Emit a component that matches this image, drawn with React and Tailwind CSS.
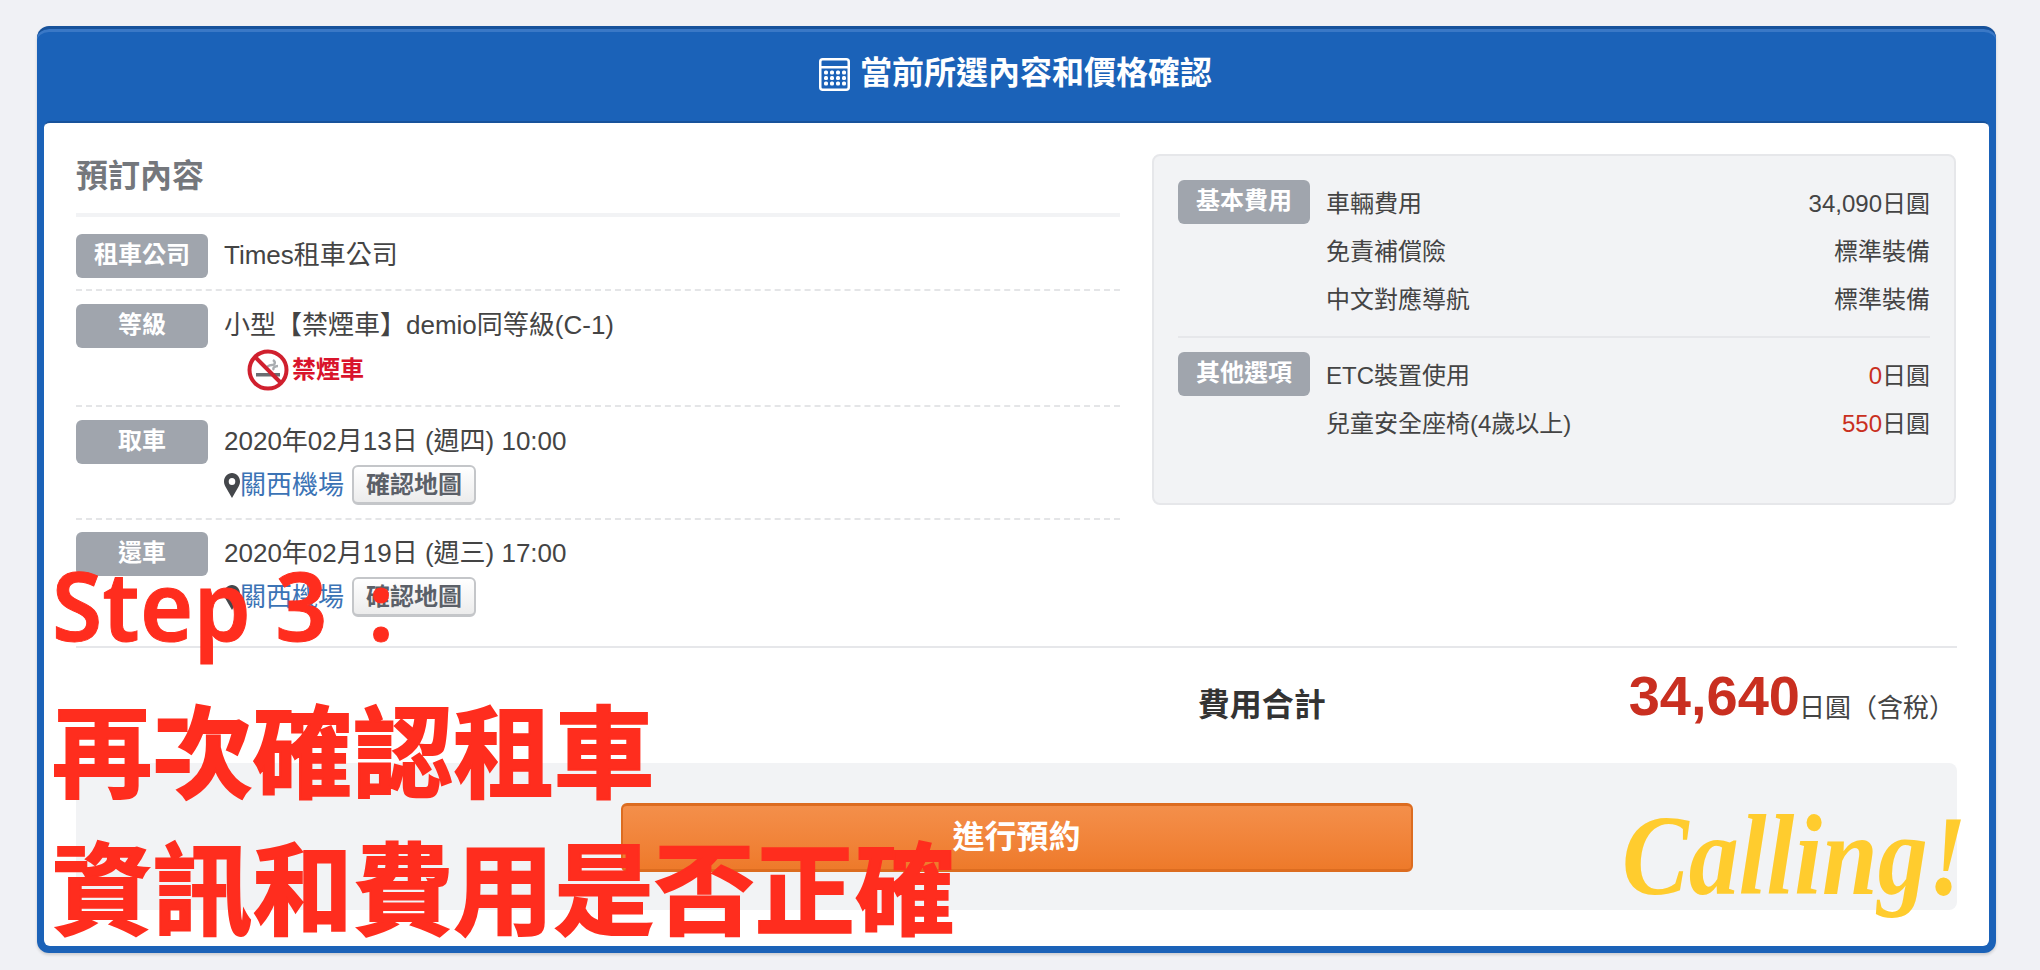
const cjk = "font-['Liberation_Sans','Noto_Sans_CJK_TC',sans-serif]";

function Label({ children }) {
  return (
    <div className="w-[132px] h-[44px] shrink-0 rounded-[6px] bg-[#a0a5ad] flex items-center justify-center text-white text-[24px] font-bold leading-none pb-[2px]">
      {children}
    </div>
  );
}

function CalcIcon() {
  return (
    <svg width="31" height="33" viewBox="0 0 31 33" className="mr-[10px] mt-[4px]">
      <rect x="1.250" y="1.250" width="28.500" height="30.500" rx="2.500" fill="none" stroke="#fff" strokeWidth="2.500" />
      <rect x="1" y="8" width="29" height="2.500" fill="#fff" />
      {[14.500, 20, 25.500].map((y) =>
        [7, 13, 19, 25].map((x) => <rect key={x + "-" + y} x={x - 2} y={y - 2} width="4" height="4" rx="1.500" fill="#fff" />)
      )}
    </svg>
  );
}

function NoSmoke() {
  return (
    <svg width="42" height="42" viewBox="0 0 42 42">
      <circle cx="21" cy="21" r="18.5" fill="#fff" stroke="#d0202e" strokeWidth="4" />
      <rect x="9" y="24" width="24" height="3.5" fill="#6b6e72" />
      <path d="M21 21c-3-3 1-5 4-5s4-3 1-5M27 21c-2-2 1-4 4-4" fill="none" stroke="#a9acb0" strokeWidth="2.4" />
      <path d="M8 8 L34 34" stroke="#d0202e" strokeWidth="4" />
    </svg>
  );
}

function Pin() {
  return (
    <svg width="16" height="25" viewBox="0 0 17 25" className="shrink-0" preserveAspectRatio="none">
      <path fillRule="evenodd" d="M8.5 0C3.8 0 0 3.8 0 8.5c0 2 .7 3.500 1.600 5.200L8.500 25l6.900-11.300c.9-1.700 1.600-3.200 1.600-5.200C17 3.800 13.200 0 8.500 0zm0 5a3.500 3.500 0 1 1 0 7 3.500 3.500 0 0 1 0-7z" fill="#44474b" />
    </svg>
  );
}

function MapLine() {
  return (
    <div className="flex items-center mt-[6px]">
      <Pin />
      <span className="text-[#3b73b5] text-[26px] leading-[36px] mr-[8px]">關西機場</span>
      <button className="w-[124px] h-[40px] rounded-[6px] border-2 border-[#c4c6c9] border-b-[3px] bg-gradient-to-b from-[#ffffff] to-[#ececec] text-[#5b6068] text-[24px] font-bold leading-none">
        確認地圖
      </button>
    </div>
  );
}

function Row({ label, children, last, className }) {
  return (
    <div className={"flex " + className + (last ? "" : " border-b-2 border-dashed border-[#e4e5e7]")}>
      <Label>{label}</Label>
      <div className="ml-[16px] pt-[3px] text-[#444] text-[26px] leading-[36px]">{children}</div>
    </div>
  );
}

function FeeRow({ name, children }) {
  return (
    <div className="h-[48px] flex items-center justify-between text-[#444] text-[24px] leading-none">
      <span>{name}</span>
      <span>{children}</span>
    </div>
  );
}

export default function App() {
  return (
    <div className={"relative h-[970px] overflow-hidden bg-[#f0f1f5] pt-[26px] pl-[37px] " + cjk}>
      <div className="w-[1959px] h-[927px] rounded-[12px] bg-[#1b62b8] border-t-[3px] border-t-[#17529b] shadow-[inset_0_3px_0_#3a78c6,0_2px_3px_rgba(0,0,0,0.15)] px-[7px] flex flex-col">
        <div className="h-[92px] shrink-0 flex items-center justify-center text-white text-[32px] font-bold pb-[5px] pr-[2px]">
          <CalcIcon />
          當前所選內容和價格確認
        </div>

        <div className="h-[825px] rounded-[6px] bg-white border-t-2 border-t-[#17529b] px-[32px] pt-[31px]">
          <div className="flex gap-[32px] h-[492px]">
            <div className="w-[1044px]">
              <h2 className="h-[59px] pt-[2px] text-[#74777c] text-[32px] font-bold leading-[40px]">預訂內容</h2>
              <div className="h-[4px] bg-[#f2f3f5]" />
              <Row label="租車公司" className="pt-[17px] h-[74px]">
                Times租車公司
              </Row>
              <Row label="等級" className="pt-[13px] h-[116px]">
                小型【禁煙車】demio同等級(C-1)
                <div className="flex items-center ml-[23px] mt-[6px]">
                  <NoSmoke />
                  <span className="text-[#d9142b] text-[24px] font-bold leading-none ml-[3px]">禁煙車</span>
                </div>
              </Row>
              <Row label="取車" className="pt-[13px] h-[113px]">
                2020年02月13日 (週四) 10:00
                <MapLine />
              </Row>
              <Row label="還車" className="pt-[12px]" last>
                2020年02月19日 (週三) 17:00
                <MapLine />
              </Row>
            </div>

            <div className="w-[804px] h-[351px] rounded-[8px] bg-[#f2f3f5] border-2 border-[#e6e7ea] px-[24px] pt-[24px]">
              <div className="flex gap-[16px] pb-[14px] border-b-2 border-[#e6e7ea]">
                <Label>基本費用</Label>
                <div className="flex-1 -mb-[2px]">
                  <FeeRow name="車輛費用">34,090日圓</FeeRow>
                  <FeeRow name="免責補償險">標準裝備</FeeRow>
                  <FeeRow name="中文對應導航">標準裝備</FeeRow>
                </div>
              </div>
              <div className="flex gap-[16px] pt-[14px]">
                <Label>其他選項</Label>
                <div className="flex-1">
                  <FeeRow name="ETC裝置使用">
                    <span className="text-[#c92f20]">0</span>日圓
                  </FeeRow>
                  <FeeRow name="兒童安全座椅(4歲以上)">
                    <span className="text-[#c92f20]">550</span>日圓
                  </FeeRow>
                </div>
              </div>
            </div>
          </div>

          <div className="h-[2px] bg-[#e6e7ea]" />

          <div className="h-[115px] flex items-center justify-end pr-[2px]">
            <span className="text-[#333] text-[32px] font-bold mr-[303px] -mt-[1px]">費用合計</span>
            <span className="text-[#c92f20] text-[56px] font-bold leading-none -mt-[20px] -mr-[1px]">34,640</span>
            <span className="text-[#444] text-[26px] leading-none mt-[4px]">日圓（含稅）</span>
          </div>

          <div className="h-[147px] rounded-[8px] bg-[#f2f3f5] flex items-center justify-center">
            <button className="w-[792px] h-[69px] rounded-[6px] border-2 border-[#dc6c20] border-t-[3px] border-b-[3px] bg-gradient-to-b from-[#f48f4a] to-[#ee7a2a] text-white text-[32px] font-bold leading-none mt-[1px]">
              進行預約
            </button>
          </div>
        </div>
      </div>

      {/* overlay caption */}
      <div className="absolute left-[52px] top-[541px] text-[#ff2d1e] font-['Noto_Sans_CJK_TC',sans-serif] font-bold text-[100px] tracking-[0.4px] leading-[137px] whitespace-nowrap [-webkit-text-stroke:2px_#ff2d1e]">
        <div className="text-[96px] font-semibold font-['Noto_Sans',sans-serif] [-webkit-text-stroke:1px_#ff2d1e] -mt-[6px] mb-[6px]">
          <span className="inline-block origin-left scale-x-[0.95]">Step 3</span> :
        </div>
        <div>再次確認租車</div>
        <div>資訊和費用是否正確</div>
      </div>

      <div className="absolute left-[1622px] top-[805px] origin-bottom text-[#ffcc2e] font-['Liberation_Serif',serif] font-bold italic text-[100px] leading-[120px] whitespace-nowrap scale-y-[1.15]">
        Calling!
      </div>
    </div>
  );
}
